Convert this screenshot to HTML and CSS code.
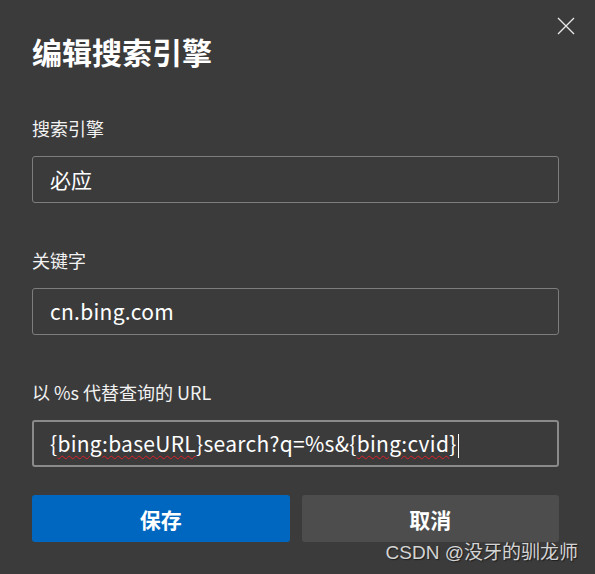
FILE: index.html
```html
<!DOCTYPE html>
<html lang="zh">
<head>
<meta charset="utf-8">
<link rel="stylesheet" href="styles.css">
</head>
<body>
<div class="dialog">
  <button class="close" aria-label="关闭">
    <svg width="18" height="18" viewBox="0 0 18 18"><path d="M1 1 L17 17 M17 1 L1 17" stroke="#e8e8e8" stroke-width="1.3" fill="none"/></svg>
  </button>
  <h1 class="title">编辑搜索引擎</h1>
  <div class="field">
    <div class="label">搜索引擎</div>
    <div class="input">必应</div>
  </div>
  <div class="field">
    <div class="label">关键字</div>
    <div class="input latin">cn.bing.com</div>
  </div>
  <div class="field last">
    <div class="label">以 %s 代替查询的 URL</div>
    <div class="input latin focused">{<span class="spell">bing:baseURL</span>}search?q=%s&amp;{<span class="spell">bing:cvid</span>}<span class="caret"></span></div>
  </div>
  <div class="actions">
    <button class="btn primary">保存</button>
    <button class="btn secondary">取消</button>
  </div>
  <div class="watermark">CSDN @没牙的驯龙师</div>
</div>
</body>
</html>
```
FILE: styles.css
```css
html, body {
  margin: 0;
  padding: 0;
  background: #3b3b3b;
}
body {
  font-family: "Noto Sans CJK SC", "Noto Sans", sans-serif;
  color: #ffffff;
  width: 595px;
  height: 574px;
  overflow: hidden;
}
.dialog {
  position: relative;
  padding: 31px 36px 0 32px;
  height: 574px;
  box-sizing: border-box;
}
.close {
  position: absolute;
  top: 17px;
  left: 557px;
  width: 18px;
  height: 18px;
  padding: 0;
  border: 0;
  background: none;
  display: block;
}
.close svg { display: block; }
.title {
  margin: 0 0 45px;
  font-size: 30px;
  line-height: 40px;
  font-weight: 700;
  color: #ffffff;
}
.field {
  display: flex;
  flex-direction: column;
  margin-bottom: 45px;
}
.field.last { margin-bottom: 28px; }
.label {
  font-size: 18px;
  line-height: 24px;
  color: #f2f2f2;
  margin-bottom: 16px;
}
.input {
  height: 47px;
  box-sizing: border-box;
  border: 1px solid #7d7d7d;
  border-radius: 3px;
  padding: 0 0 0 17px;
  font-size: 21px;
  line-height: 45px;
  color: #ffffff;
  white-space: nowrap;
}
.input.latin {
  letter-spacing: 0.3px;
}
.input.focused {
  border: 2px solid #8a8a8a;
  line-height: 43px;
  padding-left: 16px;
}
.spell {
  text-decoration: underline wavy #e0202a;
  text-decoration-thickness: 1px;
  text-underline-offset: 3px;
}
.caret {
  display: inline-block;
  width: 1px;
  height: 24px;
  background: #ffffff;
  vertical-align: middle;
  margin-left: 1px;
}
.actions {
  display: flex;
  gap: 12px;
}
.btn {
  flex: 1;
  height: 47px;
  border: 0;
  border-radius: 3px;
  font-family: "Noto Sans CJK SC", sans-serif;
  font-size: 21px;
  font-weight: 700;
  color: #ffffff;
}
.primary { background: #0067c0; }
.secondary { background: #4d4d4d; }
.watermark {
  position: absolute;
  right: 17px;
  top: 540px;
  font-family: "Liberation Sans", "Noto Sans CJK SC", sans-serif;
  font-size: 19px;
  line-height: 26px;
  color: #d4d4d4;
  text-shadow: 1px 1px 1px #1e1e1e;
}
```
